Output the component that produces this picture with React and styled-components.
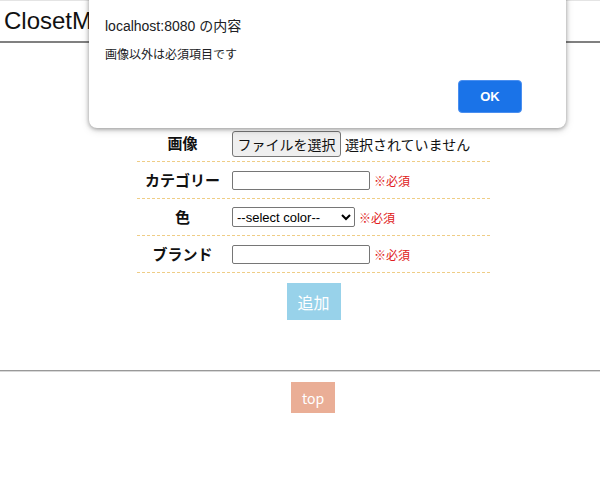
import styled, { createGlobalStyle } from "styled-components";

const GlobalStyle = createGlobalStyle`
  body {
    margin: 0;
    background: #fff;
    font-family: "Liberation Sans", "Noto Sans CJK JP", sans-serif;
    color: #000;
  }
`;

const fields = [
  { label: "カテゴリー", type: "text" },
  { label: "色", type: "select" },
  { label: "ブランド", type: "text" },
];

const App = () => {
  return (
    <>
      <GlobalStyle />
      <Page>
        <Header>
          <Title>ClosetManager</Title>
        </Header>

        <Main>
          <Form>
            <Row first>
              <Label>画像</Label>
              <Field>
                <FileButton type="button">ファイルを選択</FileButton>
                <FileStatus>選択されていません</FileStatus>
              </Field>
            </Row>
            {fields.map((f) => (
              <Row key={f.label}>
                <Label>{f.label}</Label>
                <Field>
                  {f.type === "select" ? (
                    <ColorSelect defaultValue="">
                      <option value="">--select color--</option>
                    </ColorSelect>
                  ) : (
                    <TextInput type="text" />
                  )}
                  <Required>※必須</Required>
                </Field>
              </Row>
            ))}
          </Form>
          <AddButton type="button">追加</AddButton>
        </Main>

        <Divider />

        <Footer>
          <TopButton type="button">top</TopButton>
        </Footer>

        <Dialog>
          <DialogTitle>localhost:8080 の内容</DialogTitle>
          <DialogMessage>画像以外は必須項目です</DialogMessage>
          <DialogActions>
            <OkButton type="button">OK</OkButton>
          </DialogActions>
        </Dialog>
      </Page>
    </>
  );
};

export default App;

const Page = styled.div`
  position: relative;
  width: 600px;
  height: 500px;
  overflow: hidden;
`;

const Header = styled.header`
  height: 40px;
  border-top: 1px solid #e4e4e4;
  border-bottom: 2px solid #808080;
  display: flex;
  align-items: center;
  padding-left: 4px;
`;

const Title = styled.h1`
  margin: 0;
  font-size: 24px;
  font-weight: 400;
  color: #111;
  white-space: nowrap;
`;

const Main = styled.main`
  padding: 84px 0 0 27px;
  height: 243px;
  display: flex;
  flex-direction: column;
  align-items: center;
`;

const Form = styled.div`
  width: 353px;
  display: flex;
  flex-direction: column;
`;

const Row = styled.div`
  display: grid;
  grid-template-columns: 91px 1fr;
  align-items: center;
  height: ${(p) => (p.first ? "33px" : "36px")};
  padding-bottom: ${(p) => (p.first ? "1px" : "0")};
  border-bottom: 1px dashed #efcd86;
`;

const Label = styled.div`
  text-align: center;
  font-family: "Noto Sans CJK JP", sans-serif;
  font-weight: 700;
  font-size: 15px;
  color: #111;
  margin-top: -2px;
`;

const Field = styled.div`
  display: flex;
  align-items: center;
  gap: 4px;
  padding-left: 4px;
`;

const FileButton = styled.button`
  height: 26px;
  width: 109px;
  padding: 0;
  background: #efefef;
  border: 1px solid #767676;
  border-radius: 3px;
  font-family: "Noto Sans CJK JP", sans-serif;
  font-size: 14px;
  color: #111;
`;

const FileStatus = styled.span`
  font-family: "Noto Sans CJK JP", sans-serif;
  font-size: 14px;
  color: #111;
`;

const TextInput = styled.input`
  box-sizing: border-box;
  width: 138px;
  height: 19px;
  border: 1px solid #767676;
  border-radius: 2px;
  padding: 0 2px;
`;

const ColorSelect = styled.select`
  box-sizing: border-box;
  width: 123px;
  height: 20px;
  border: 1px solid #767676;
  border-radius: 2px;
  font-family: "Liberation Sans", sans-serif;
  font-size: 13px;
  color: #000;
  background: #fff;
  padding: 0;
`;

const Required = styled.span`
  font-family: "Noto Sans CJK JP", sans-serif;
  font-size: 12px;
  color: #e02020;
`;

const AddButton = styled.button`
  margin-top: 10px;
  width: 54px;
  height: 37px;
  border: none;
  background: #98d2ea;
  color: #fff;
  font-family: "Noto Sans CJK JP", sans-serif;
  font-size: 16px;
  padding: 0;
`;

const Divider = styled.hr`
  margin: 0;
  border: none;
  border-top: 1px solid #999;
  border-bottom: 1px solid #d8d8d8;
`;

const Footer = styled.footer`
  padding: 10px 0 0 26px;
  display: flex;
  justify-content: center;
`;

const TopButton = styled.button`
  width: 44px;
  height: 31px;
  border: none;
  background: #eaae96;
  color: #fff;
  font-family: "Noto Sans CJK JP", sans-serif;
  font-size: 14px;
  padding: 0;
`;

const Dialog = styled.div`
  position: absolute;
  top: -8px;
  left: 89px;
  width: 477px;
  height: 136px;
  box-sizing: border-box;
  padding: 23px 16px 0 16px;
  background: #fff;
  border-radius: 8px;
  box-shadow: 0 1px 4px rgba(0, 0, 0, 0.35), 0 2px 8px rgba(0, 0, 0, 0.15);
  font-family: "Liberation Sans", "Noto Sans CJK JP", sans-serif;
  color: #202124;
`;

const DialogTitle = styled.div`
  font-size: 14px;
  line-height: 22px;
`;

const DialogMessage = styled.div`
  margin-top: 10px;
  font-size: 12px;
  line-height: 16px;
`;

const DialogActions = styled.div`
  display: flex;
  justify-content: flex-end;
  margin-top: 17px;
  padding-right: 28px;
`;

const OkButton = styled.button`
  width: 64px;
  height: 33px;
  border: 1px solid #4a8ff0;
  border-radius: 4px;
  background: #1a73e8;
  color: #fff;
  font-family: "Liberation Sans", sans-serif;
  font-weight: 700;
  font-size: 13px;
`;
